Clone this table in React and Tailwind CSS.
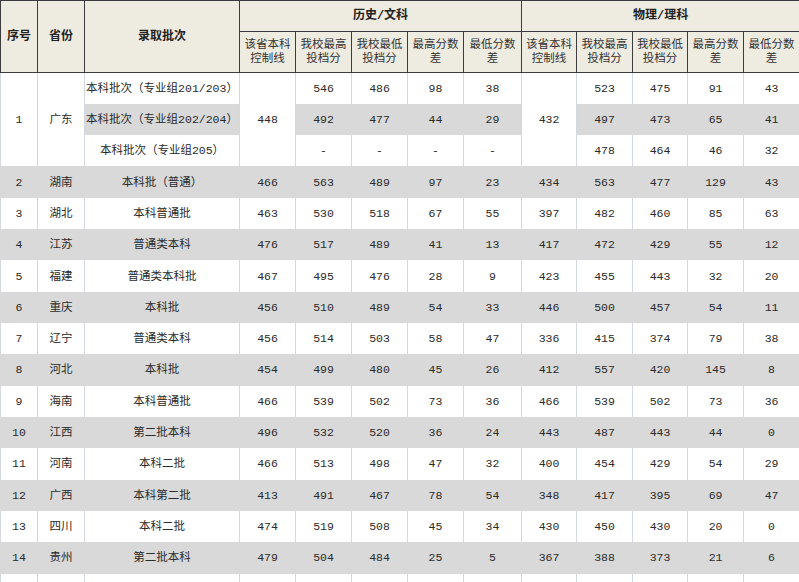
import React from "react";

const rows = [
  ["2", "湖南", "本科批（普通）", "466", "563", "489", "97", "23", "434", "563", "477", "129", "43"],
  ["3", "湖北", "本科普通批", "463", "530", "518", "67", "55", "397", "482", "460", "85", "63"],
  ["4", "江苏", "普通类本科", "476", "517", "489", "41", "13", "417", "472", "429", "55", "12"],
  ["5", "福建", "普通类本科批", "467", "495", "476", "28", "9", "423", "455", "443", "32", "20"],
  ["6", "重庆", "本科批", "456", "510", "489", "54", "33", "446", "500", "457", "54", "11"],
  ["7", "辽宁", "普通类本科", "456", "514", "503", "58", "47", "336", "415", "374", "79", "38"],
  ["8", "河北", "本科批", "454", "499", "480", "45", "26", "412", "557", "420", "145", "8"],
  ["9", "海南", "本科普通批", "466", "539", "502", "73", "36", "466", "539", "502", "73", "36"],
  ["10", "江西", "第二批本科", "496", "532", "520", "36", "24", "443", "487", "443", "44", "0"],
  ["11", "河南", "本科二批", "466", "513", "498", "47", "32", "400", "454", "429", "54", "29"],
  ["12", "广西", "本科第二批", "413", "491", "467", "78", "54", "348", "417", "395", "69", "47"],
  ["13", "四川", "本科二批", "474", "519", "508", "45", "34", "430", "450", "430", "20", "0"],
  ["14", "贵州", "第二批本科", "479", "504", "484", "25", "5", "367", "388", "373", "21", "6"],
];

const widths = [37, 47, 155, 56, 56, 56, 56, 58, 55, 56, 55, 56, 56];

const hd = "border border-[#3c3c3c] bg-[#eeebe1] text-center align-middle p-0";
const subHd = hd + " font-normal text-[#333] leading-[14px]";
const white = "bg-white border-x border-[#d3d8e1] text-center align-middle p-0 whitespace-nowrap";
const grey = "bg-[#d9d9d9] border-x border-[#d9d9d9] text-center align-middle p-0 whitespace-nowrap";

export default function App() {
  return (
    <div
      className="w-[799px] h-[582px] overflow-hidden bg-white text-[11.5px] text-[#2a2a2a]"
      style={{ fontFamily: '"Liberation Mono", "Noto Sans CJK SC", monospace' }}
    >
      <table className="border-collapse table-fixed w-[799px]">
        <colgroup>
          {widths.map((w, i) => (
            <col key={i} style={{ width: w }} />
          ))}
        </colgroup>
        <thead>
          <tr className="h-[31px]">
            <th rowSpan={2} className={hd + " font-bold text-[12px] text-[#222]"}>序号</th>
            <th rowSpan={2} className={hd + " font-bold text-[12px] text-[#222]"}>省份</th>
            <th rowSpan={2} className={hd + " font-bold text-[12px] text-[#222]"}>录取批次</th>
            <th colSpan={5} className={hd + " font-bold text-[12px] text-[#222]"}>历史/文科</th>
            <th colSpan={5} className={hd + " font-bold text-[12px] text-[#222]"}>物理/理科</th>
          </tr>
          <tr className="h-[41px]">
            {[0, 1].map((g) => (
              <React.Fragment key={g}>
                <th className={subHd}>该省本科<br />控制线</th>
                <th className={subHd}>我校最高<br />投档分</th>
                <th className={subHd}>我校最低<br />投档分</th>
                <th className={subHd}>最高分数<br />差</th>
                <th className={subHd}>最低分数<br />差</th>
              </React.Fragment>
            ))}
          </tr>
        </thead>
        <tbody>
          <tr className="h-[31.33px]">
            <td rowSpan={3} className={white}>1</td>
            <td rowSpan={3} className={white}>广东</td>
            <td className={white}>本科批次（专业组201/203）</td>
            <td rowSpan={3} className={white}>448</td>
            <td className={white}>546</td>
            <td className={white}>486</td>
            <td className={white}>98</td>
            <td className={white}>38</td>
            <td rowSpan={3} className={white}>432</td>
            <td className={white}>523</td>
            <td className={white}>475</td>
            <td className={white}>91</td>
            <td className={white}>43</td>
          </tr>
          <tr className="h-[31.33px]">
            <td className={grey}>本科批次（专业组202/204）</td>
            <td className={grey}>492</td>
            <td className={grey}>477</td>
            <td className={grey}>44</td>
            <td className={grey}>29</td>
            <td className={grey}>497</td>
            <td className={grey}>473</td>
            <td className={grey}>65</td>
            <td className={grey}>41</td>
          </tr>
          <tr className="h-[31.33px]">
            <td className={white}>本科批次（专业组205）</td>
            <td className={white}>-</td>
            <td className={white}>-</td>
            <td className={white}>-</td>
            <td className={white}>-</td>
            <td className={white}>478</td>
            <td className={white}>464</td>
            <td className={white}>46</td>
            <td className={white}>32</td>
          </tr>
          {rows.map((r, i) => (
            <tr key={r[0]} className="h-[31.33px]">
              {r.map((c, j) => (
                <td key={j} className={i % 2 === 0 ? grey : white}>{c}</td>
              ))}
            </tr>
          ))}
          <tr className="h-[31.33px]">
            {widths.map((w, j) => (
              <td key={j} className={white}>&nbsp;</td>
            ))}
          </tr>
        </tbody>
      </table>
    </div>
  );
}
